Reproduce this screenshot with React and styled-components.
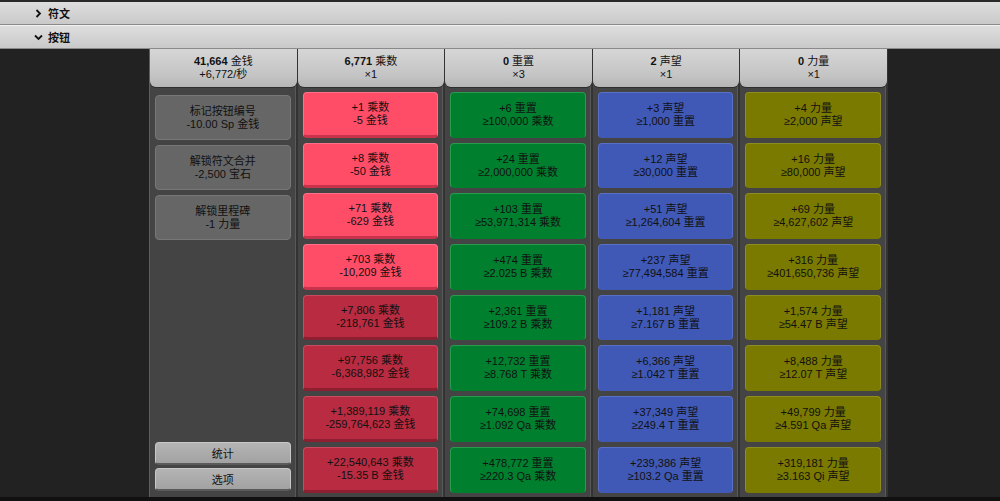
import React from 'react';
import styled, { createGlobalStyle } from 'styled-components';

const Global = createGlobalStyle`
  html, body { margin: 0; padding: 0; background: #222; }
  body {
    font-family: "Liberation Sans", "Noto Sans CJK SC", sans-serif;
    font-size: 11px;
    color: #111;
  }
`;

const Page = styled.div`
  width: 1000px;
  height: 501px;
  display: flex;
  flex-direction: column;
  background: #222;
  overflow: hidden;
  border-top: 2px solid #2a2a2a;
  box-sizing: border-box;
`;

const TabBar = styled.div`
  height: 22px;
  display: flex;
  align-items: center;
  gap: 5px;
  padding-left: 34px;
  background: linear-gradient(#dedede, #c9c9c9);
  border-bottom: 1px solid #8a8a8a;
  font-weight: bold;
  font-size: 11px;
  color: #111;
  & + & { border-top: 1px solid #f0f0f0; }
`;

const Stage = styled.div`
  flex: 1;
  display: flex;
  padding-left: 149px;
  border-bottom: 4px solid #111;
`;

const Panel = styled.div`
  width: 738px;
  display: flex;
  background: #444;
  border-left: 1px solid #5e5e5e;
`;

const Column = styled.div`
  flex: 1;
  display: flex;
  flex-direction: column;
  border-right: 2px solid #333;
  box-shadow: inset -1px 0 0 #595959;
`;

const Header = styled.div`
  height: 38px;
  margin-right: -1px;
  display: flex;
  flex-direction: column;
  align-items: center;
  justify-content: center;
  line-height: 13px;
  background: linear-gradient(#d6d6d6, #c4c4c4 70%, #b5b5b5);
  border-radius: 0 0 6px 6px;
  box-shadow: 0 1px 0 #2d2d2d;
  b { font-weight: bold; }
`;

const List = styled.div`
  flex: 1;
  display: flex;
  flex-direction: column;
  gap: ${p => p.$gap}px;
  padding: ${p => p.$top}px 5px ${p => p.$bottom}px 5px;
`;

const palette = {
  grey: ['#666', '#777', '#777', '#111'],
  red: ['#ff4d68', '#ff7088', '#c8334b', '#111'],
  dark: ['#b82b40', '#c94c5e', '#8e1f30', '#111'],
  green: ['#00802f', '#2a9a4e', '#00802f', '#111'],
  blue: ['#4059b6', '#5a70c4', '#4059b6', '#111'],
  olive: ['#7a7900', '#8e8d20', '#7a7900', '#111'],
};

const Btn = styled.div`
  height: ${p => p.$h}px;
  box-sizing: border-box;
  display: flex;
  flex-direction: column;
  align-items: center;
  justify-content: center;
  line-height: 13px;
  border-radius: 4px;
  background: ${p => palette[p.$c][0]};
  border: 1px solid ${p => palette[p.$c][1]};
  border-bottom: ${p => (p.$c === 'red' || p.$c === 'dark') ? 3 : 1}px solid ${p => palette[p.$c][2]};
  color: ${p => palette[p.$c][3]};
  white-space: nowrap;
`;

const Spacer = styled.div`
  flex: 1;
`;

const SmallBtn = styled.div`
  height: 23px;
  box-sizing: border-box;
  display: flex;
  align-items: center;
  justify-content: center;
  border-radius: 4px;
  background: linear-gradient(#b4b4b4, #a2a2a2);
  border: 1px solid #c8c8c8;
  border-bottom: 2px solid #5a5a5a;
  color: #111;
  & + & { margin-top: -2px; }
`;

const Chevron = ({ down }) => (
  <svg width="9" height="9" viewBox="0 0 9 9">
    <polyline
      points={down ? '1,2.5 4.5,6 8,2.5' : '2.5,1 6,4.5 2.5,8'}
      fill="none" stroke="#111" strokeWidth="1.8" />
  </svg>
);

const columns = [
  {
    head: ['41,664', '金钱', '+6,772/秒'],
    items: [
      ['标记按钮编号', '-10.00 Sp 金钱'],
      ['解锁符文合并', '-2,500 宝石'],
      ['解锁里程碑', '-1 力量'],
    ],
  },
  {
    head: ['6,771', '乘数', '×1'],
    items: [
      ['+1 乘数', '-5 金钱', 'red'],
      ['+8 乘数', '-50 金钱', 'red'],
      ['+71 乘数', '-629 金钱', 'red'],
      ['+703 乘数', '-10,209 金钱', 'red'],
      ['+7,806 乘数', '-218,761 金钱', 'dark'],
      ['+97,756 乘数', '-6,368,982 金钱', 'dark'],
      ['+1,389,119 乘数', '-259,764,623 金钱', 'dark'],
      ['+22,540,643 乘数', '-15.35 B 金钱', 'dark'],
    ],
  },
  {
    head: ['0', '重置', '×3'],
    items: [
      ['+6 重置', '≥100,000 乘数'],
      ['+24 重置', '≥2,000,000 乘数'],
      ['+103 重置', '≥53,971,314 乘数'],
      ['+474 重置', '≥2.025 B 乘数'],
      ['+2,361 重置', '≥109.2 B 乘数'],
      ['+12,732 重置', '≥8.768 T 乘数'],
      ['+74,698 重置', '≥1.092 Qa 乘数'],
      ['+478,772 重置', '≥220.3 Qa 乘数'],
    ].map(i => [...i, 'green']),
  },
  {
    head: ['2', '声望', '×1'],
    items: [
      ['+3 声望', '≥1,000 重置'],
      ['+12 声望', '≥30,000 重置'],
      ['+51 声望', '≥1,264,604 重置'],
      ['+237 声望', '≥77,494,584 重置'],
      ['+1,181 声望', '≥7.167 B 重置'],
      ['+6,366 声望', '≥1.042 T 重置'],
      ['+37,349 声望', '≥249.4 T 重置'],
      ['+239,386 声望', '≥103.2 Qa 重置'],
    ].map(i => [...i, 'blue']),
  },
  {
    head: ['0', '力量', '×1'],
    items: [
      ['+4 力量', '≥2,000 声望'],
      ['+16 力量', '≥80,000 声望'],
      ['+69 力量', '≥4,627,602 声望'],
      ['+316 力量', '≥401,650,736 声望'],
      ['+1,574 力量', '≥54.47 B 声望'],
      ['+8,488 力量', '≥12.07 T 声望'],
      ['+49,799 力量', '≥4.591 Qa 声望'],
      ['+319,181 力量', '≥3.163 Qi 声望'],
    ].map(i => [...i, 'olive']),
  },
];

const App = () => (
  <>
    <Global />
    <Page>
      <TabBar><Chevron />符文</TabBar>
      <TabBar><Chevron down />按钮</TabBar>
      <Stage>
        <Panel>
          {columns.map((col, ci) => (
            <Column key={ci}>
              <Header>
                <div><b>{col.head[0]}</b> {col.head[1]}</div>
                <div>{col.head[2]}</div>
              </Header>
              {ci === 0 ? (
                <List $gap={5} $top={8} $bottom={6}>
                  {col.items.map((it, i) => (
                    <Btn key={i} $c="grey" $h={45}>
                      <div>{it[0]}</div>
                      <div>{it[1]}</div>
                    </Btn>
                  ))}
                  <Spacer />
                  <SmallBtn>统计</SmallBtn>
                  <SmallBtn>选项</SmallBtn>
                </List>
              ) : (
                <List $gap={5} $top={5} $bottom={3}>
                  {col.items.map((it, i) => (
                    <Btn key={i} $c={it[2]} $h={45.7}>
                      <div>{it[0]}</div>
                      <div>{it[1]}</div>
                    </Btn>
                  ))}
                </List>
              )}
            </Column>
          ))}
        </Panel>
      </Stage>
    </Page>
  </>
);

export default App;
